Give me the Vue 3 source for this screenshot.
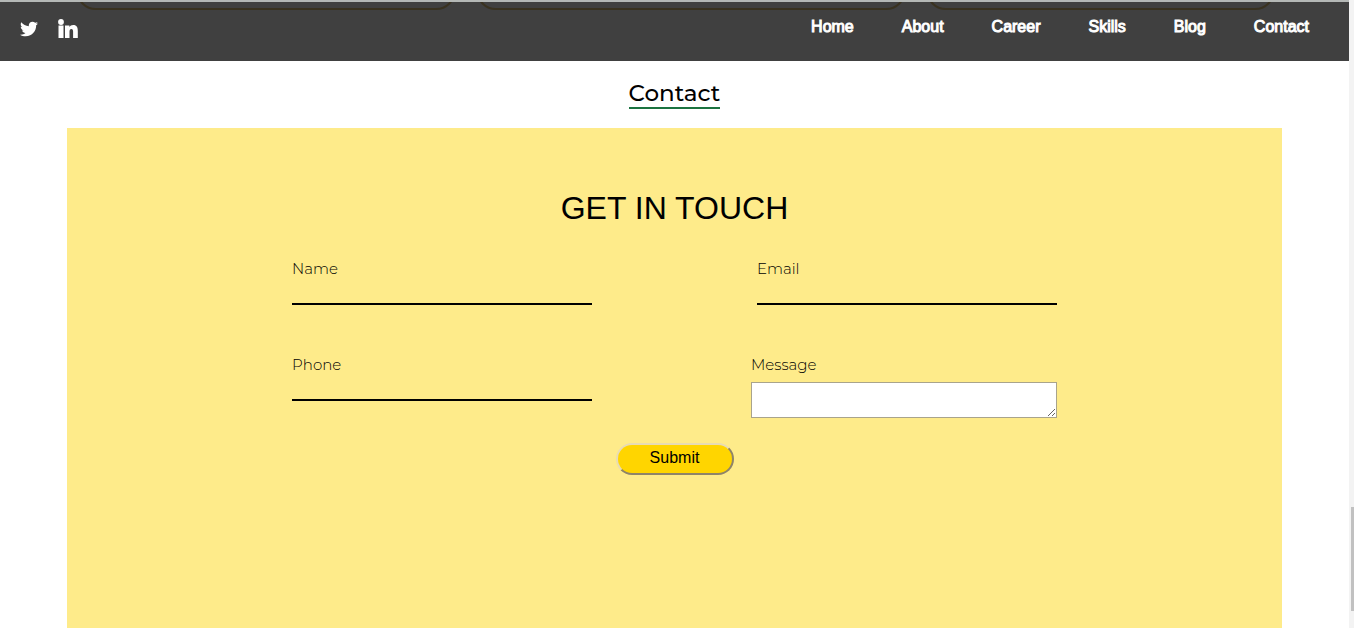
<script setup>
import { ref } from 'vue'

const links = ['Home', 'About', 'Career', 'Skills', 'Blog', 'Contact']
const name = ref('')
const email = ref('')
const phone = ref('')
const message = ref('')
</script>

<template>
  <div class="page">
    <div class="content">
      <header class="bar">
        <div class="cards" aria-hidden="true">
          <span class="edge first"></span>
          <span class="edge second"></span>
          <span class="edge third"></span>
        </div>
        <div class="social">
          <a href="#twitter" aria-label="Twitter">
            <svg width="18" height="20" viewBox="0 0 512 512" fill="#fff">
              <path d="M459.4 151.7c.3 4.5.3 9.1.3 13.6 0 138.7-105.6 298.6-298.6 298.6-59.500 0-114.700-17.200-161.100-47.100 8.400 1 16.600 1.300 25.300 1.300 49.100 0 94.200-16.600 130.300-44.800-46.100-1-84.800-31.200-98.100-72.800 6.500 1 13 1.600 19.800 1.600 9.400 0 18.800-1.300 27.600-3.600-48.100-9.700-84.100-52-84.100-103v-1.300c14 7.800 30.200 12.700 47.400 13.300-28.300-18.800-46.800-51-46.800-87.400 0-19.500 5.200-37.400 14.300-53 51.700 63.700 129.300 105.300 216.400 109.800-1.600-7.800-2.600-15.900-2.600-24 0-57.800 46.800-104.900 104.900-104.900 30.200 0 57.500 12.700 76.700 33.100 23.700-4.500 46.500-13.300 66.600-25.300-7.800 24.400-24.400 44.800-46.100 57.800 21.100-2.300 41.600-8.100 60.400-16.200-14.300 20.800-32.200 39.300-52.600 54.300z" />
            </svg>
          </a>
          <a href="#linkedin" aria-label="LinkedIn">
            <svg width="20" height="20" viewBox="0 0 20 20" fill="#fff">
              <circle cx="3" cy="3" r="2.900" />
              <path d="M.5 6.500h5V19h-5zM7 6.500h4.400v1.500c.7-1.100 2-1.900 3.800-1.900 3.700 0 4.600 2.500 4.600 5.800V19h-4.700v-6.200c0-1.500-.2-2.900-1.700-2.900s-1.900 1.300-1.900 2.900V19H7z" />
            </svg>
          </a>
        </div>
        <nav class="nav">
          <a v-for="link in links" :key="link" :href="'#' + link.toLowerCase()">{{ link }}</a>
        </nav>
      </header>

      <main id="contact" class="main">
        <h2 class="title">Contact</h2>
        <section class="panel">
          <h3 class="heading">GET IN TOUCH</h3>
          <form class="form" @submit.prevent>
            <div class="row">
              <div class="field">
                <label for="name">Name</label>
                <input id="name" v-model="name" type="text" />
              </div>
              <div class="field">
                <label for="email">Email</label>
                <input id="email" v-model="email" type="email" />
              </div>
            </div>
            <div class="row">
              <div class="field">
                <label for="phone">Phone</label>
                <input id="phone" v-model="phone" type="tel" />
              </div>
              <div class="field wide">
                <label for="message">Message</label>
                <textarea id="message" v-model="message"></textarea>
              </div>
            </div>
            <button class="submit" type="submit">Submit</button>
          </form>
        </section>
      </main>
    </div>
    <div class="track" aria-hidden="true">
      <div class="thumb"></div>
    </div>
  </div>
</template>

<style>
body {
  margin: 0;
  background: #fff;
}
</style>

<style scoped>
.page {
  display: flex;
  min-height: 100vh;
  font-family: "Liberation Sans", Arial, sans-serif;
  color: #000;
}
.content {
  flex: 1;
  display: flex;
  flex-direction: column;
}
.bar {
  position: relative;
  display: flex;
  justify-content: space-between;
  align-items: flex-start;
  box-sizing: border-box;
  height: 61px;
  padding: 16px 40px 0 20px;
  border-top: 2px solid #b4b8b6;
  background: #404040;
}
.cards {
  position: absolute;
  inset: 0;
  overflow: hidden;
}
.edge {
  position: absolute;
  box-sizing: border-box;
  top: -52px;
  height: 60px;
  border: 2px solid #393220;
  border-radius: 20px;
}
.first {
  left: 76px;
  width: 380px;
}
.second {
  left: 476px;
  width: 430px;
}
.third {
  left: 926px;
  width: 349px;
}
.social {
  position: relative;
  display: flex;
  gap: 20px;
  margin-top: 1px;
}
.social svg {
  display: block;
}
.nav {
  position: relative;
  display: flex;
  gap: 48px;
}
.nav a {
  color: #fff;
  font-size: 16px;
  line-height: 18px;
  text-decoration: none;
  -webkit-text-stroke: 1px #fff;
}
.main {
  flex: 1;
  display: flex;
  flex-direction: column;
  align-items: center;
}
.title {
  margin: 19px 0 19px;
  border-bottom: 2px solid #1b7340;
  font-family: Montserrat, Inter, sans-serif;
  font-size: 23px;
  font-weight: 500;
  line-height: 27px;
}
.panel {
  flex: 1;
  box-sizing: border-box;
  width: 90%;
  padding: 62px 0 40px;
  background: #feeb8a;
}
.heading {
  margin: 0 0 33px;
  font-size: 32px;
  font-weight: 400;
  line-height: 36px;
  text-align: center;
}
.form {
  display: flex;
  flex-direction: column;
  align-items: center;
  width: 63%;
  margin: 0 auto;
}
.row {
  display: flex;
  justify-content: space-between;
  align-items: flex-start;
  width: 100%;
}
.row:first-child {
  margin-bottom: 50px;
}
.field {
  display: flex;
  flex-direction: column;
  width: 300px;
}
.wide {
  width: 306px;
}
label {
  font-family: Montserrat, Inter, sans-serif;
  font-size: 15px;
  font-weight: 300;
  line-height: 20px;
}
input {
  box-sizing: border-box;
  height: 26px;
  padding: 0;
  border: 0;
  border-bottom: 2px solid #000;
  background: transparent;
  font: inherit;
}
textarea {
  box-sizing: border-box;
  height: 36px;
  margin-top: 7px;
  padding: 2px;
  border: 1px solid #a9a48c;
  background: #fff;
  resize: both;
}
.submit {
  width: 118px;
  height: 32px;
  margin-top: 25px;
  padding: 0 0 2px;
  border: 2px solid;
  border-color: #e8dcb4 #8f8468 #8f8468 #e8dcb4;
  border-radius: 16px;
  background: #ffd500;
  color: #000;
  font-family: "Liberation Sans", Arial, sans-serif;
  font-size: 16px;
}
.track {
  display: flex;
  flex-direction: column;
  box-sizing: border-box;
  width: 5px;
  padding: 507px 0 17px 2px;
  background: #f3f3f3;
}
.thumb {
  flex: 1;
  background: #c1c1c1;
}
</style>
